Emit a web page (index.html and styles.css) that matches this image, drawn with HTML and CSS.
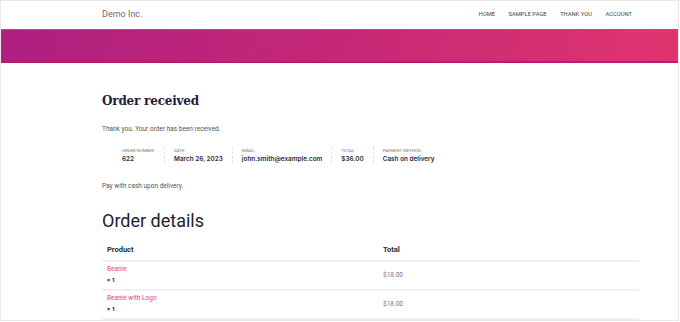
FILE: index.html
```html
<!DOCTYPE html>
<html lang="en">
<head>
  <meta charset="UTF-8" />
  <title>Order received</title>
  <link rel="stylesheet" href="styles.css">
</head>
<body>
  <div class="frame">
    <header class="site-header">
      <div class="brand">Demo Inc.</div>
      <nav>
        <ul>
          <li><a href="#">Home</a></li>
          <li><a href="#">Sample Page</a></li>
          <li><a href="#">Thank You</a></li>
          <li><a href="#">Account</a></li>
        </ul>
      </nav>
    </header>

    <div class="banner"></div>

    <main class="content">
      <h1 class="page-title">Order received</h1>
      <p class="notice">Thank you. Your order has been received.</p>

      <ul class="overview">
        <li><span class="label">Order number:</span><strong>622</strong></li>
        <li><span class="label">Date:</span><strong>March 26, 2023</strong></li>
        <li><span class="label">Email:</span><strong>john.smith@example.com</strong></li>
        <li><span class="label">Total:</span><strong>$36.00</strong></li>
        <li><span class="label">Payment method:</span><strong>Cash on delivery</strong></li>
      </ul>

      <p class="notice pay">Pay with cash upon delivery.</p>

      <h2 class="section-title">Order details</h2>

      <table class="details">
        <thead>
          <tr><th>Product</th><th class="col-total">Total</th></tr>
        </thead>
        <tbody>
          <tr>
            <td><a href="#">Beanie</a><span class="qty">× 1</span></td>
            <td class="col-total price">$18.00</td>
          </tr>
          <tr>
            <td><a href="#">Beanie with Logo</a><span class="qty">× 1</span></td>
            <td class="col-total price">$18.00</td>
          </tr>
        </tbody>
      </table>
    </main>
  </div>
</body>
</html>
```

FILE: styles.css
```css
/* Reset */
* {
  box-sizing: border-box;
  margin: 0;
  padding: 0;
}

body {
  font-family: Roboto, 'Noto Sans', sans-serif;
  background-color: #fff;
  color: #1e2235;
  overflow: hidden;
}

.frame {
  width: 679px;
  height: 321px;
  border: 1px solid #e8e8e8;
  overflow: hidden;
}

/* Header */
.site-header {
  height: 28px;
  display: flex;
  align-items: center;
  justify-content: space-between;
  padding: 0 46px 2px 101px;
}

.brand {
  font-size: 9px;
  line-height: 12px;
  color: #6b6b6b;
}

.site-header ul {
  list-style: none;
  display: flex;
  gap: 13.5px;
  font-size: 5.8px;
  line-height: 8px;
}

.site-header a {
  color: #444;
  text-transform: uppercase;
  text-decoration: none;
}

/* Banner */
.banner {
  height: 34px;
  background: linear-gradient(100deg, #ae1f80 0%, #c32777 45%, #e0346f 100%);
  border-top: 1px solid #c64591;
  border-bottom: 2px solid #b81c70;
}

/* Content */
.content {
  padding: 29px 39px 0 101px;
}

.page-title {
  font-family: 'DejaVu Serif', serif;
  font-size: 12px;
  letter-spacing: -0.2px;
  font-weight: bold;
  color: #1e2235;
  line-height: 18px;
}

.notice {
  font-size: 6.5px;
  color: #555;
  margin-top: 15px;
}

.overview {
  list-style: none;
  display: flex;
  margin: 14px 0 0 11px;
}

.overview li {
  display: flex;
  flex-direction: column;
  padding: 0 9px;
  border-left: 1px dashed #e2e2e2;
  line-height: 8px;
}

.overview li:first-child {
  border-left: none;
}

.overview .label {
  font-size: 4.3px;
  color: #777;
  text-transform: uppercase;
}

.overview strong {
  font-family: Inter, Roboto, sans-serif;
  font-size: 6.4px;
  font-weight: 600;
  color: #2a2d3a;
}

.pay {
  margin-top: 19px;
}

.section-title {
  font-size: 18px;
  font-weight: normal;
  color: #1e2235;
  margin-top: 19px;
  line-height: 24px;
}

/* Order table */
.details {
  width: 100%;
  border-collapse: collapse;
  margin-top: 7px;
}

.details th {
  text-align: left;
  font-size: 7.5px;
  font-weight: bold;
  color: #2a2d3a;
  line-height: 10px;
  padding: 5px 5px 5px;
  border-bottom: 2px solid #f0f0f0;
}

.details td {
  font-size: 6.5px;
  padding: 2px 5px 3px;
  border-bottom: 2px solid #f0f0f0;
  vertical-align: middle;
  line-height: 11px;
}

.details a {
  display: block;
  color: #e8437b;
  text-decoration: none;
  line-height: 11px;
}

.details .qty {
  display: block;
  font-weight: bold;
  font-size: 6px;
  line-height: 9px;
  height: 11px;
  color: #222;
}

.col-total {
  width: 261px;
}

.price {
  color: #777;
}
```
